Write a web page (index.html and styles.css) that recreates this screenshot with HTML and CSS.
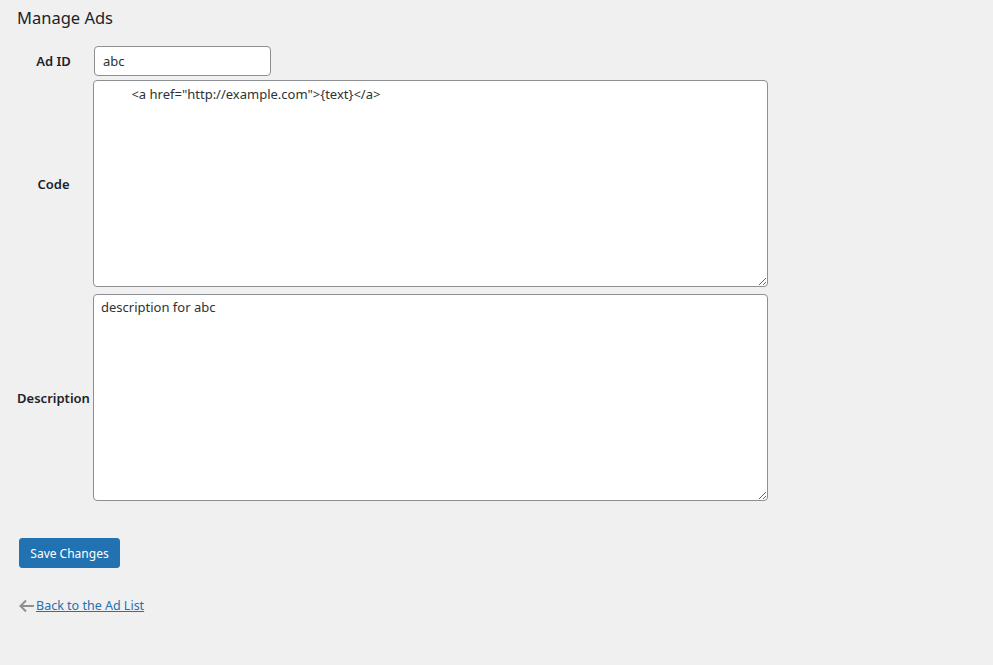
FILE: index.html
```html
<!DOCTYPE html>
<html lang="en">
<head>
    <meta charset="UTF-8">
    <meta name="viewport" content="width=device-width, initial-scale=1.0">
    <title>Manage Ads</title>
    <link rel="stylesheet" href="styles.css">
</head>
<body>
    <div class="wrap">
        <h2 class="page-title">Manage Ads</h2>

        <form class="ad-form">
            <div class="form-row">
                <label class="form-label" for="adId">Ad ID</label>
                <input class="text-input" id="adId" type="text" value="abc">
            </div>
            <div class="form-row row-code">
                <label class="form-label" for="adCode">Code</label>
                <textarea class="text-area" id="adCode">         &lt;a href="http://example.com"&gt;{text}&lt;/a&gt;</textarea>
            </div>
            <div class="form-row row-desc">
                <label class="form-label" for="adDesc">Description</label>
                <textarea class="text-area" id="adDesc">description for abc</textarea>
            </div>

            <div class="submit-row">
                <button type="button" class="button-primary">Save Changes</button>
            </div>
        </form>

        <p class="back-link">
            <svg class="back-arrow" width="17" height="14" viewBox="0 0 17 14">
                <path d="M16 7H2.5M8 1.5L2.5 7L8 12.5" fill="none" stroke="#8c8f94" stroke-width="2"/>
            </svg>
            <a href="#">Back to the Ad List</a>
        </p>
    </div>
</body>
</html>
```

FILE: styles.css
```css
:root {
    --bg: #f0f0f1;
    --text: #1d2327;
    --border: #8c8f94;
    --blue: #2271b1;
}

* {
    margin: 0;
    padding: 0;
    box-sizing: border-box;
}

body {
    background-color: var(--bg);
    color: var(--text);
    font-family: "Noto Sans", "Open Sans", sans-serif;
    font-size: 13px;
}

.wrap {
    padding: 7px 0 0 17px;
}

.page-title {
    font-size: 16.5px;
    font-weight: 400;
    line-height: 22px;
    margin-bottom: 17px;
}

.form-row {
    display: grid;
    grid-template-columns: 76px auto;
    align-items: center;
}

.row-code {
    margin-top: 4px;
}

.row-desc {
    margin-top: 7px;
}

.form-label {
    font-weight: 600;
    font-size: 13px;
    text-align: center;
    margin-left: -3px;
}

.text-input,
.text-area {
    font-family: inherit;
    font-size: 13px;
    color: #2c3338;
    background: #fff;
    border: 1px solid var(--border);
    border-radius: 4px;
}

.text-input {
    width: 177px;
    height: 30px;
    padding: 0 8px;
    margin-left: 1px;
}

.text-area {
    display: block;
    width: 675px;
    height: 207px;
    padding: 4px 7px;
    line-height: 19px;
    resize: vertical;
    white-space: pre;
}

.row-desc .text-area {
    padding-top: 3px;
}

.submit-row {
    margin-top: 37px;
    padding-left: 2px;
}

.button-primary {
    background-color: var(--blue);
    color: #fff;
    border: 1px solid var(--blue);
    border-radius: 3px;
    height: 30px;
    width: 101px;
    font-family: inherit;
    font-size: 12px;
    cursor: pointer;
}

.back-link {
    margin-top: 29px;
    display: flex;
    align-items: center;
}

.back-arrow {
    display: block;
    margin-left: 1px;
    margin-right: 1px;
}

.back-link a {
    color: var(--blue);
    font-size: 12.5px;
}
```
